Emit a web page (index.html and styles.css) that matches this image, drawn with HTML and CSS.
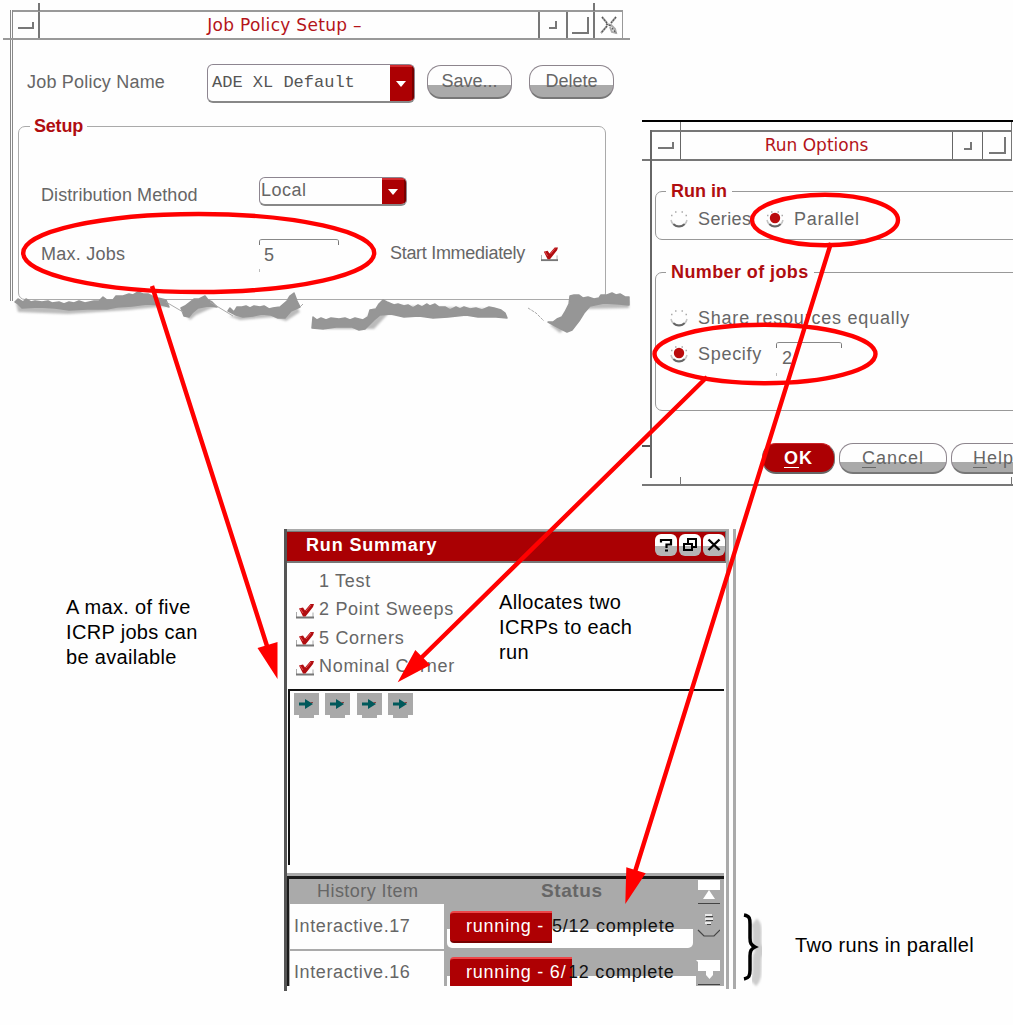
FILE: index.html
```html
<!DOCTYPE html>
<html lang="en">
<head>
<meta charset="utf-8">
<title>Job Policy Setup</title>
<link rel="stylesheet" href="styles.css">
</head>
<body>
<svg class="defs" width="0" height="0" aria-hidden="true">
  <symbol id="check" viewBox="0 0 18 16">
    <path d="M.5 9v5.500M17 9.500v5" fill="none" stroke="#aaa" stroke-width="1"/>
    <path d="M0 14.500h18" fill="none" stroke="#777" stroke-width="2"/>
    <path d="M3 5.500l4-1 2 3L14.500 1H18l-1 3-7.500 9.500H7z" fill="#b00d10"/>
    <path d="M4 5.500l3 4.500M10 8l5-6" fill="none" stroke="#e65054" stroke-width="1"/>
  </symbol>
  <symbol id="radio" viewBox="0 0 18 18">
    <path d="M1 10c1.500 8 14.500 8 16 0" fill="none" stroke="#c4c4c4" stroke-width="1.500"/>
    <path d="M3.500 14c2.500 3.400 8.500 3.400 11 0" fill="none" stroke="#666" stroke-width="2"/>
    <path d="M5 2h1.500M11.500 2H13M1 5.500h1.500M15.500 5.500H17" stroke="#aaa" stroke-width="1.300"/>
  </symbol>
  <symbol id="item" viewBox="0 0 25 25">
    <path d="M0 0h25v22h-5v3H5v-3H0z" fill="#a9a9a9"/>
    <path d="M5 9.500h6V6l8 5-8 5v-3.500H5z" fill="#00595b"/>
    <path d="M16.500 9.500H19" stroke="#844" stroke-width="1"/>
  </symbol>
</svg>

<main class="figure">
  <section class="window policy">
    <header class="titlebar">
      <span class="tb menu"><i></i></span>
      <h1>Job Policy Setup –</h1>
      <span class="tb min"><i></i></span>
      <span class="tb max"><i></i></span>
      <span class="tb close"><svg width="18" height="20" viewBox="0 0 18 20" fill="none"><path d="M2 2l5 6M16 2l-5 6M6 9l5 1 4 4 1 4-4-1-2-5M7 11l-6 7" stroke="#aaa" stroke-width="2"/><path d="M2 2l5 6M16 2l-5 6M6 9l5 2M12 13l4 5M7 11l-6 7" stroke="#555" stroke-width="1.200" stroke-dasharray="2 1"/></svg></span>
    </header>
    <div class="name-row">
      <label>Job Policy Name</label>
      <div class="combo big"><span>ADE XL Default</span><b><svg width="10" height="6" viewBox="0 0 10 6"><path d="M0 0h10L5 6z" fill="#fff"/></svg></b></div>
      <button class="save">Save...</button>
      <button class="delete">Delete</button>
    </div>
    <fieldset class="setup">
      <legend>Setup</legend>
      <div class="dist-row">
        <label>Distribution Method</label>
        <div class="combo small"><span>Local</span><b><svg width="10" height="6" viewBox="0 0 10 6"><path d="M0 0h10L5 6z" fill="#fff"/></svg></b></div>
      </div>
      <div class="max-row">
        <label class="max">Max. Jobs</label>
        <div class="entry">5</div>
        <label class="start">Start Immediately</label>
        <svg width="17" height="16"><use href="#check"/></svg>
      </div>
    </fieldset>
  </section>

  <section class="options">
    <div class="options-body">
      <header class="titlebar">
        <span class="tb menu"><i></i></span>
        <h1>Run Options</h1>
        <span class="tb min"><i></i></span>
        <span class="tb max"><i></i></span>
      </header>
      <fieldset class="run-in">
        <legend>Run in</legend>
        <div class="choices">
          <svg width="18" height="18"><use href="#radio"/></svg><label class="series">Series</label>
          <svg width="18" height="18"><use href="#radio"/><circle cx="9" cy="8" r="5.200" fill="#ba0b0d"/></svg><label>Parallel</label>
        </div>
      </fieldset>
      <fieldset class="jobs">
        <legend>Number of jobs</legend>
        <div class="choices share">
          <svg width="18" height="18"><use href="#radio"/></svg><label>Share resources equally</label>
        </div>
        <div class="choices specify">
          <svg width="18" height="18"><use href="#radio"/><circle cx="9" cy="8" r="5.200" fill="#ba0b0d"/></svg><label>Specify</label>
          <div class="entry">2</div>
        </div>
      </fieldset>
      <div class="actions">
        <button class="ok"><u>O</u>K</button>
        <button class="cancel"><u>C</u>ancel</button>
        <button class="help"><u>H</u>elp</button>
      </div>
    </div>
  </section>

  <section class="summary">
    <div class="panel">
      <header class="redbar">
        <h2>Run Summary</h2>
        <span class="rb"><svg width="22" height="22" viewBox="0 0 22 22" fill="none" stroke="#000" stroke-width="2.200"><path d="M6 8.500V6h10v4.500h-4.500V14M10 16.500h3"/></svg></span>
        <span class="rb"><svg width="22" height="22" viewBox="0 0 22 22" fill="none" stroke="#000" stroke-width="2"><path d="M9 9V5h8v8h-4M5 10h8v6H5z"/></svg></span>
        <span class="rb"><svg width="22" height="22" viewBox="0 0 22 22" fill="none" stroke="#000" stroke-width="2.400"><path d="M5.500 5.500l11 10.500M16.500 5.500l-11 10.500"/></svg></span>
      </header>
      <ul class="counts">
        <li><svg width="18" height="16"></svg><span>1 Test</span></li>
        <li><svg width="18" height="16"><use href="#check"/></svg><span>2 Point Sweeps</span></li>
        <li><svg width="18" height="16"><use href="#check"/></svg><span>5 Corners</span></li>
        <li><svg width="18" height="16"><use href="#check"/></svg><span>Nominal Corner</span></li>
      </ul>
      <div class="queue">
        <svg width="25" height="25"><use href="#item"/></svg>
        <svg width="25" height="25"><use href="#item"/></svg>
        <svg width="25" height="25"><use href="#item"/></svg>
        <svg width="25" height="25"><use href="#item"/></svg>
      </div>
      <div class="history">
        <div class="table">
          <div class="thead"><span class="h-item">History Item</span><span class="h-status">Status</span></div>
          <div class="trow first">
            <div class="cell">Interactive.17</div>
            <div class="status"><span class="done">running - </span><span class="rest">5/12 complete</span></div>
          </div>
          <div class="trow second">
            <div class="cell">Interactive.16</div>
            <div class="status"><span class="done">running - 6/</span><span class="rest">12 complete</span></div>
          </div>
        </div>
        <svg class="scroll" width="24" height="107" viewBox="0 0 24 107">
          <path d="M2 1h22v10H2zM13 11l6 9H7z" fill="#fff"/>
          <path d="M2 24.500h22M2 51l6 6h10l6-6M2 105.500h22" fill="none" stroke="#444" stroke-width="1.200"/>
          <path d="M0 81h24v11H2v-9zM10 92h7v4l-3.500 4-3.500-4z" fill="#fff"/>
          <path d="M9 36h7M9 40h8M9 44h6" stroke="#fff" stroke-width="1.500"/>
          <path d="M10 37.500h7M10 41.500h7M11 45.500h4" stroke="#444" stroke-width="1"/>
        </svg>
      </div>
    </div>
  </section>

  <p class="note five">A max. of five<br>ICRP jobs can<br>be available</p>
  <p class="note alloc">Allocates two<br>ICRPs to each<br>run</p>
  <p class="note two">Two runs in parallel</p>

  <svg class="overlay" width="1013" height="1025" viewBox="0 0 1013 1025">
    <defs><filter id="soft" x="-10%" y="-50%" width="120%" height="200%"><feGaussianBlur stdDeviation="1.300"/></filter></defs>
    <g>
      <g fill="#bbb" filter="url(#soft)" transform="translate(0 3)">
        <path d="M16 300l60 2 32-3 40-6 20 10-40 4-60 4-50-2zM183 308l13-9 14 0 4 5-18 8-6 5zM229 313l50-4 15-10 6 10-14 9-12-4-34 3z"/>
        <path d="M318 318h46l8-10 12-6 110 4 8 6-20-1-40 2-54-2-14 15h-48zM550 322l6-2 8-8 8-14h57v7l-45 1-12 12-12 12z"/>
      </g>
      <g fill="#969696" stroke="#969696" stroke-width="1.500" stroke-linejoin="round">
        <path transform="translate(0 1)" d="M15 301l3-3 5 3 3-3 5 3 4-1 7 1 6-1 4 2 7-1 5 2 5-2 5 1 5-2 6 2 9-2 5 0 4-4 4 3 6 0 3-4 7 0 6-2 4 1 5-3 5 2 5 0 4 2 6 2 8 2 3 7-7-2-15-1-15 2-15 1-10 2-20 0-18 1-14-2-16-1-17 1-4-4zM181 307l4-2 9-7 5 0 6-3 3 4 4 2 5 5-9-1-10 2-6 5-3 4-5-1zM228 310l2-3 4 4 3-5 5 0 4-1 4 2 4-2 6 1 4-1 5 3 4-1 7-1 7-6 3-5 4-3 3 8 3 6-9 4-6 7-7 0-7-3-9-1-9 2-10 1-7-2z"/>
        <path d="M166 302l17 10M210 302l23 14M300 307l3-3" fill="none" stroke="#aaa" stroke-width="1"/>
        <path d="M313 317l4 3 4-2 5 2 5-2 8 1 6-1 5 2 5-2 8 2 5-3 2-7 6-1 3-5 4-4 4 2 7 3 4-1 6 2 4-1 5 3 5-3 4 2 5-3 3 2 5-2 4 3 6 0 5 3 6-3 4 2 4-2 6 2 6-1 6 2 7-3 5 1 7 2 4 3 2 5-11-1-18 0-12-2-18 2-15 1-14-2-15 1-13-3-11 1-6 5-9 9-6 1-7-3-16 0-13 2-11-1zM548 322l5 0 4-3 5-2 3-5 4-8 1-8 4-1 5 0 4 3 5-1 6 2 5-1 2-3 6 0 5-2 4 2 4-1 5 3 4 0v8l-10-1-15-1-14 3-6 7-5 8-7 9-5 2-6-3z"/>
        <path d="M528 308l8 5 8 8" fill="none" stroke="#aaa" stroke-width="1" stroke-dasharray="3 1"/>
      </g>
    </g>
    <g fill="none" stroke="#f00" stroke-width="4.400">
      <ellipse cx="198.700" cy="253" rx="175.500" ry="39"/>
      <ellipse cx="825" cy="220" rx="73" ry="25.200"/>
      <ellipse cx="765" cy="354" rx="110.500" ry="29.200"/>
      <path d="M152 286l115 360M707 377L418 661M831 243L634 875"/>
    </g>
    <path d="M257.500 648l20-6v37zM397.700 682.300l17.600-32.300 15 15zM625.300 904l1-36.700 19.400 6z" fill="#f00"/>
    <path d="M754 922c4 3 3 8 3 17 0 7 0 8 4 12-4 3-4 6-4 14 0 10 0 14-4 18" fill="none" stroke="#ccc" stroke-width="9" filter="url(#soft)"/>
    <path d="M744 915c6 1 6 4 6 9v14c0 5 1 7 5 9-4 2-5 4-5 9v14c0 6-1 8-6 9" fill="none" stroke="#000" stroke-width="3.500"/>
  </svg>
</main>
</body>
</html>
```
FILE: styles.css
```css
* { box-sizing: border-box; }
body { margin: 0; background: #fefefe; font: 18px/20px "Liberation Sans", Arial, sans-serif; color: #666; }
h1, h2, p, ul, fieldset, legend { margin: 0; padding: 0; }
ul { list-style: none; }
svg { display: block; flex: none; }
.defs { position: absolute; }
.figure { position: relative; width: 1013px; height: 1025px; overflow: hidden; }
label, span { white-space: pre; }
label { display: block; flex: none; }

/* title bars */
.titlebar { display: flex; position: relative; border: 2px solid #999; border-width: 2px 1px 2px 0; }
.titlebar h1 { flex: 1; text-align: center; color: #b4141a; font: 17px/26px "DejaVu Sans", sans-serif; letter-spacing: .3px; white-space: pre; }
.tb { position: relative; display: flex; flex: none; align-items: center; justify-content: center; border-left: 2px solid #777; }
.tb i { border: solid #777; border-width: 0 2px 2px 0; }
.menu { border-left: 0; border-right: 2px solid #777; }
.menu i { width: 16px; height: 7px; }
.min i { width: 8px; height: 8px; }
.max i { width: 17px; height: 17px; }

/* Job Policy Setup */
.policy { position: absolute; left: 10px; top: 10px; width: 613px; height: 291px; border-left: 3px double #888; }
.policy .titlebar { height: 30px; }
.policy .menu { width: 27px; }
.policy .min, .policy .max { width: 27.500px; }
.policy .close { width: 29px; }
.policy h1 { padding-right: 9px; }
.policy .menu::after { content: ""; position: absolute; right: -2px; top: -9px; width: 2px; height: 8px; background: #777; }
.policy .close::after { content: ""; position: absolute; left: -2px; top: -9px; width: 2px; height: 8px; background: #777; }
.policy .titlebar::after { content: ""; position: absolute; left: -10px; right: -8px; bottom: -2px; height: 2px; background: #999; }
.name-row { display: flex; align-items: flex-start; height: 39px; margin: 24px 0 13px 14px; }
.name-row label { width: 180px; padding-top: 8px; letter-spacing: .2px; }
.combo { display: flex; flex: none; border: 1px solid #8d8590; border-bottom: 2px solid #888; border-radius: 6px; overflow: hidden; }
.combo span { flex: 1; }
.combo b { display: flex; align-items: center; justify-content: center; width: 24px; background: #ac0003; border-top: 2px solid #d32a2e; border-right: 2px solid #780000; }
.big { width: 208px; height: 39px; margin-right: 12px; }
.big span { padding: 8px 0 0 4px; font: 17px/20px "Liberation Mono", "Courier New", monospace; color: #555; }
.small { width: 148px; height: 29px; }
.small span { padding: 2px 0 0 1px; letter-spacing: .5px; }
button { flex: none; margin: 0; padding: 0; border: 1px solid #8d858d; border-bottom: 2px solid #777; border-radius: 14px; background: linear-gradient(#fefefe 62%, #aaa 62%); color: #666; font: inherit; }
.save, .delete { width: 85px; height: 34px; margin: 1px 17px 0 0; padding-bottom: 1px; }
.delete { margin-right: 0; }
fieldset { min-width: 0; border: 1px solid #aaa; border-radius: 7px; }
legend { color: #b00d10; font-weight: bold; }
.setup { width: 588px; height: 184px; margin-left: 5px; }
.setup legend { margin-left: 11px; padding: 0 4px; letter-spacing: -.2px; }
.dist-row { display: flex; box-sizing: content-box; height: 21px; padding: 41px 0 0 22px; }
.dist-row label { width: 218px; padding-top: 8px; letter-spacing: .08px; }
.max-row { display: flex; align-items: flex-start; height: 34px; margin: 41px 0 0 22px; }
.max-row label.max { width: 218px; padding-top: 5px; letter-spacing: .25px; }
.max-row svg { margin-top: 7px; }
.start { width: 151px; padding-top: 4px; margin-left: 51px; letter-spacing: -.3px; }
.entry { flex: none; width: 80px; height: 33px; padding: 5px 0 0 5px; background: linear-gradient(#777, #777) 0 0/1px 5px no-repeat, linear-gradient(#777, #777) 100% 0/1px 5px no-repeat, linear-gradient(#bbb, #bbb) 0 100%/1px 3px no-repeat; border-top: 1px solid #888; border-radius: 3px 3px 0 0; }

/* Run Options */
.options { position: absolute; left: 642px; top: 120px; width: 371px; height: 366px; border: solid #000; border-width: 2px 0 0; overflow: hidden; background: linear-gradient(#777, #777) 38px 100%/1px 9px no-repeat, linear-gradient(#777, #777) 369px 100%/1px 9px no-repeat, linear-gradient(#777, #777) 0 100%/100% 2px no-repeat, linear-gradient(#555, #555) 0 323px/8px 2px no-repeat, linear-gradient(#777, #777) 0 37px/8px 2px no-repeat, linear-gradient(#777, #777) 38px 0/1px 8px no-repeat, linear-gradient(#777, #777) 369px 0/1px 8px no-repeat; }
.options-body { width: 362px; height: 348px; margin: 8px 0 0 8px; border-left: 2px solid #666; }
.options .titlebar { height: 31px; border-color: #777; }
.options .titlebar h1 { letter-spacing: 0; }
.options .tb { border-color: #666; border-width: 0 0 0 1px; }
.options .menu { width: 29px; border-width: 0 1px 0 0; }
.options .min { width: 30px; }
.options .max { width: 29px; }
.run-in, .jobs { width: 370px; margin-left: 3px; border-color: #999; }
.run-in legend, .jobs legend { margin-left: 10px; padding: 0 5px; }
.run-in { height: 59px; margin-top: 20px; }
.jobs { height: 149px; margin-top: 22px; }
.jobs legend { letter-spacing: .4px; }
.choices { display: flex; align-items: center; padding-left: 14px; height: 20px; letter-spacing: .7px; }
.choices label { margin-left: 10px; }
.run-in .choices { margin-top: 8px; }
.choices .series { width: 68px; letter-spacing: .4px; }
.share { margin-top: 26px; letter-spacing: .78px; }
.specify { margin-top: 16px; }
.specify .entry { align-self: flex-start; width: 66px; height: 34px; margin: -2px 0 0 14px; padding: 5px 0 0 6px; }
.actions { display: flex; gap: 4px; margin: 32px 0 0 110px; }
.actions button { height: 31px; letter-spacing: 1px; background: linear-gradient(#fefefe 66%, #aaa 66%); }
.actions .ok { width: 73px; background: #ac0003; border-color: #cb2024 #777 #666; color: #fff; font-weight: bold; letter-spacing: 1px; }
.actions .cancel { width: 108px; }
.actions .help { width: 85px; }
u { text-underline-offset: 3px; text-decoration-thickness: 1px; }

/* Run Summary */
.summary { position: absolute; left: 284px; top: 529px; width: 452px; height: 462px; border-left: 3px solid #555; background: linear-gradient(#aaa, #aaa) 0 0/442px 2px no-repeat, linear-gradient(#aaa, #aaa) 439px 0/3px 460px no-repeat, linear-gradient(#aaa, #aaa) 446px 0/3px 460px no-repeat; padding-top: 2px; }
.panel { width: 439px; }
.redbar { display: flex; align-items: center; gap: 2px; height: 32px; padding: 0 0 3px 19px; background: #aa0003; border: solid #777; border-width: 1px 1px 2px 0; }
.redbar h2 { flex: 1; color: #fff; font: bold 18px/20px "Liberation Sans", Arial, sans-serif; letter-spacing: .85px; padding-bottom: 1px; }
.rb { width: 22px; height: 22px; border-radius: 6px; background: linear-gradient(#fefefe 55%, #b5b5b5 55%); }
.counts { height: 126px; padding: 8px 0 0 9px; }
.counts li { display: flex; gap: 5px; align-items: center; height: 28.500px; padding-bottom: 9px; letter-spacing: .7px; }
.counts li svg { margin-top: 3px; }
.queue { display: flex; gap: 6.300px; width: 436px; height: 176px; margin-left: 1px; padding: 2px 0 0 4px; border: solid #111; border-width: 2px 0 0 2px; }
.history { display: flex; width: 437px; height: 113px; margin-top: 8px; border-top: 3px solid #aaa; background: linear-gradient(#1a1a1a, #1a1a1a) 0 0/100% 3px no-repeat #aaa; }
.table { width: 409px; border: solid #1a1a1a; border-width: 3px 0 0 2px; }
.scroll { margin-top: 3px; }
.thead { display: flex; height: 25px; padding-top: 2px; letter-spacing: .45px; }
.h-item { width: 224px; padding-left: 28px; }
.h-status { padding-left: 28px; font-weight: bold; font-size: 19px; letter-spacing: .6px; }
.trow { display: flex; overflow: hidden; }
.first { height: 47px; }
.second { height: 35px; }
.cell { width: 154px; flex: none; padding: 12px 0 0 4px; margin-left: 1px; background: #fefefe; letter-spacing: .6px; border-bottom: 2px solid #aaa; }
.second .cell { padding-top: 11px; border: 0; }
.status { display: flex; flex: none; width: 246px; margin-left: 3px; padding: 7px 0 0 3px; letter-spacing: .78px; background: linear-gradient(transparent 25px, #fefefe 25px); border-radius: 0 0 5px 5px; }
.first .status { height: 44px; }
.second .status { width: 249px; padding-top: 6px; border-radius: 0; }
.done { flex: none; width: 102px; height: 32px; padding: 3px 0 0 16px; background: #ae0003; border-top: 2px solid #ed4649; border-bottom: 2px solid #700; border-radius: 4px 0 0 4px; color: #fff; }
.rest { padding-top: 5px; color: #111; }
.second .done { width: 122px; }
.second .rest { margin-left: -4px; position: relative; }

/* captions */
.note { position: absolute; color: #000; font-size: 20px; line-height: 25px; letter-spacing: .33px; white-space: nowrap; }
.five { left: 66px; top: 595px; }
.alloc { left: 499px; top: 590px; }
.two { left: 795px; top: 933px; }
.overlay { position: absolute; left: 0; top: 0; }
```
